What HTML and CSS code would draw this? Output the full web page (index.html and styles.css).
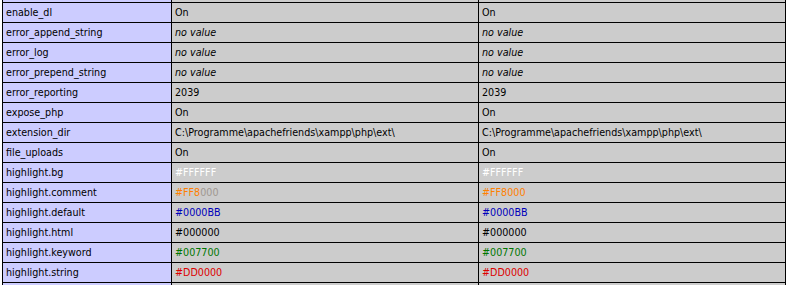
FILE: index.html
```html
<!DOCTYPE html>
<html>
<head>
<meta charset="utf-8">
<link rel="stylesheet" href="styles.css">
</head>
<body>
<table class="info">
<tr><td class="e">&nbsp;</td><td class="v">&nbsp;</td><td class="v">&nbsp;</td></tr>
<tr><td class="e">enable_dl</td><td class="v">On</td><td class="v">On</td></tr>
<tr><td class="e">error_append_string</td><td class="v"><i>no value</i></td><td class="v"><i>no value</i></td></tr>
<tr><td class="e">error_log</td><td class="v"><i>no value</i></td><td class="v"><i>no value</i></td></tr>
<tr><td class="e">error_prepend_string</td><td class="v"><i>no value</i></td><td class="v"><i>no value</i></td></tr>
<tr><td class="e">error_reporting</td><td class="v">2039</td><td class="v">2039</td></tr>
<tr><td class="e">expose_php</td><td class="v">On</td><td class="v">On</td></tr>
<tr><td class="e">extension_dir</td><td class="v">C:\Programme\apachefriends\xampp\php\ext\</td><td class="v">C:\Programme\apachefriends\xampp\php\ext\</td></tr>
<tr><td class="e">file_uploads</td><td class="v">On</td><td class="v">On</td></tr>
<tr><td class="e">highlight.bg</td><td class="v"><span class="c-white">#FFFFFF</span></td><td class="v"><span class="c-white">#FFFFFF</span></td></tr>
<tr><td class="e">highlight.comment</td><td class="v"><span class="c-orange">#FF8</span><span class="c-faded">000</span></td><td class="v"><span class="c-orange">#FF8000</span></td></tr>
<tr><td class="e">highlight.default</td><td class="v"><span class="c-blue">#0000BB</span></td><td class="v"><span class="c-blue">#0000BB</span></td></tr>
<tr><td class="e">highlight.html</td><td class="v"><span class="c-black">#000000</span></td><td class="v"><span class="c-black">#000000</span></td></tr>
<tr><td class="e">highlight.keyword</td><td class="v"><span class="c-green">#007700</span></td><td class="v"><span class="c-green">#007700</span></td></tr>
<tr><td class="e">highlight.string</td><td class="v"><span class="c-red">#DD0000</span></td><td class="v"><span class="c-red">#DD0000</span></td></tr>
<tr><td class="e">&nbsp;</td><td class="v">&nbsp;</td><td class="v">&nbsp;</td></tr>
</table>
</body>
</html>
```
FILE: styles.css
```css
html, body {
  margin: 0;
  padding: 0;
  background: #ffffff;
  overflow: hidden;
}

.info {
  margin: -18px 0 0 2px;
  border-collapse: separate;
  border-spacing: 0;
  border-top: 1px solid #000;
  border-left: 1px solid #000;
  table-layout: fixed;
  width: 784px;
  font-family: "DejaVu Sans", Verdana, sans-serif;
  font-size: 9.6px;
  color: #000;
}

.info td {
  border-right: 1px solid #000;
  border-bottom: 1px solid #000;
  padding: 0 3px;
  line-height: 19px;
  height: 19px;
  white-space: nowrap;
  overflow: hidden;
  vertical-align: middle;
}

.info td.e {
  background: #ccccff;
  width: 162px;
}

.info td.v {
  background: #cccccc;
  width: 300px;
}

.c-white { color: #ffffff; }
.c-orange { color: #ff8000; }
.c-faded { color: #a09890; }
.c-blue { color: #0000bb; }
.c-black { color: #000000; }
.c-green { color: #007700; }
.c-red { color: #dd0000; }
```
